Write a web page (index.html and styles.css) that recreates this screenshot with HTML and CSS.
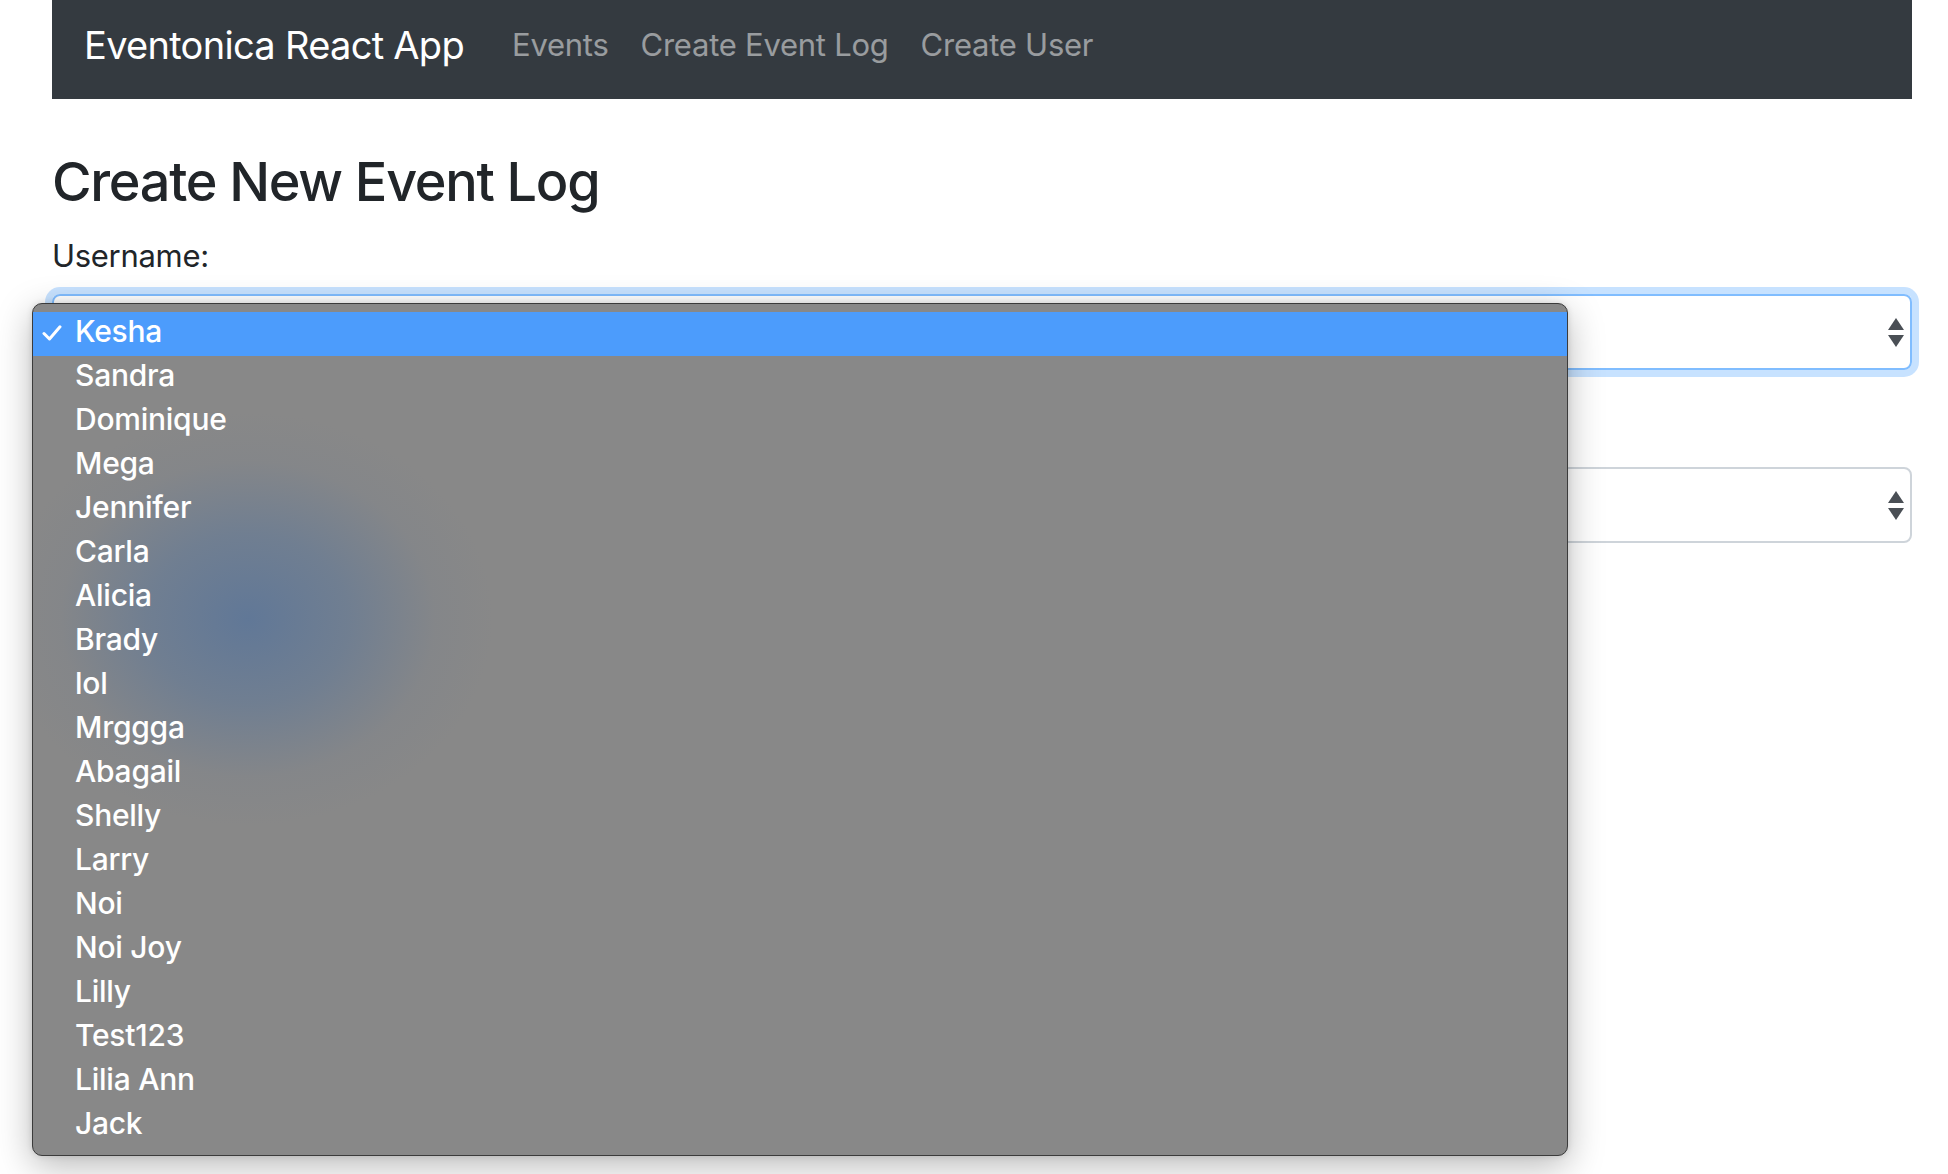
FILE: index.html
```html
<!DOCTYPE html>
<html lang="en">
<head>
<meta charset="utf-8">
<title>Eventonica React App</title>
<link rel="stylesheet" href="styles.css">
</head>
<body>
<div class="page">
  <nav class="navbar">
    <span class="brand">Eventonica React App</span>
    <a class="nav-link">Events</a>
    <a class="nav-link">Create Event Log</a>
    <a class="nav-link">Create User</a>
  </nav>
  <main class="content">
    <h3 class="title">Create New Event Log</h3>
    <div class="form-group">
      <label class="label">Username:</label>
      <div class="select focused">
        <span class="select-value"></span>
        <svg class="arrows" width="16" height="29" viewBox="0 0 16 29"><path d="M8 0 L16 12 L0 12 Z" fill="#4a4f55"/><path d="M0 17 L16 17 L8 29 Z" fill="#4a4f55"/></svg>
      </div>
    </div>
    <div class="form-group covered">
      <div class="select">
        <span class="select-value"></span>
        <svg class="arrows" width="16" height="29" viewBox="0 0 16 29"><path d="M8 0 L16 12 L0 12 Z" fill="#4a4f55"/><path d="M0 17 L16 17 L8 29 Z" fill="#4a4f55"/></svg>
      </div>
    </div>
  </main>
</div>
<div class="menu">
  <div class="blob"></div>
  <ul class="menu-list">
    <li class="item selected"><svg class="check" width="20" height="16" viewBox="0 0 20 16"><path d="M2 8.5 L7.5 14 L18 1.8" fill="none" stroke="#fff" stroke-width="3" stroke-linecap="round" stroke-linejoin="round"/></svg><span>Kesha</span></li>
    <li class="item"><span>Sandra</span></li>
    <li class="item"><span>Dominique</span></li>
    <li class="item"><span>Mega</span></li>
    <li class="item"><span>Jennifer</span></li>
    <li class="item"><span>Carla</span></li>
    <li class="item"><span>Alicia</span></li>
    <li class="item"><span>Brady</span></li>
    <li class="item"><span>lol</span></li>
    <li class="item"><span>Mrggga</span></li>
    <li class="item"><span>Abagail</span></li>
    <li class="item"><span>Shelly</span></li>
    <li class="item"><span>Larry</span></li>
    <li class="item"><span>Noi</span></li>
    <li class="item"><span>Noi Joy</span></li>
    <li class="item"><span>Lilly</span></li>
    <li class="item"><span>Test123</span></li>
    <li class="item"><span>Lilia Ann</span></li>
    <li class="item"><span>Jack</span></li>
  </ul>
</div>
</body>
</html>
```
FILE: styles.css
```css
html, body {
  margin: 0;
  padding: 0;
  background: #ffffff;
}
body {
  font-family: Inter, "Noto Sans", "Liberation Sans", sans-serif;
  color: #212529;
  position: relative;
  min-height: 1174px;
  overflow: hidden;
}
.page {
  padding: 0 36px 0 52px;
}
.navbar {
  height: 99px;
  background: #343a40;
  display: flex;
  align-items: center;
  padding: 0 32px 10px 32px;
  box-sizing: border-box;
}
.brand {
  font-size: 38px;
  color: #ffffff;
  margin-right: 32px;
  letter-spacing: -0.7px;
}
.nav-link {
  font-size: 31px;
  padding: 0 16px;
  color: rgba(255, 255, 255, 0.5);
  letter-spacing: -0.25px;
}
.content {
  padding-top: 49px;
}
.title {
  font-size: 54px;
  font-weight: 500;
  line-height: 67px;
  margin: 0 0 21px 0;
  letter-spacing: -1.3px;
}
.form-group {
  margin-bottom: 39px;
}
.form-group.covered {
  padding-top: 58px;
}
.label {
  display: block;
  font-size: 31px;
  line-height: 40px;
  margin-bottom: 18px;
  letter-spacing: -0.3px;
}
.select {
  height: 76px;
  box-sizing: border-box;
  border: 2px solid #ced4da;
  border-radius: 8px;
  display: flex;
  align-items: center;
  justify-content: space-between;
  padding: 0 6px 0 24px;
  font-size: 32px;
  color: #495057;
}
.select.focused {
  border-color: #80bdff;
  box-shadow: 0 0 0 7px rgba(0, 123, 255, 0.22);
}
.arrows {
  display: block;
}
.menu {
  position: absolute;
  left: 32px;
  top: 303px;
  width: 1536px;
  height: 853px;
  box-sizing: border-box;
  background: #888888;
  border: 1px solid #3b3b3b;
  border-radius: 10px;
  box-shadow: 0 10px 36px rgba(0, 0, 0, 0.28), 0 0 6px rgba(0, 0, 0, 0.12);
  overflow: hidden;
  padding: 8px 0;
}
.blob {
  position: absolute;
  left: -40px;
  top: 100px;
  width: 510px;
  height: 430px;
  border-radius: 50%;
  background: radial-gradient(ellipse at center, rgba(78, 112, 158, 0.68) 0%, rgba(86, 116, 155, 0.48) 28%, rgba(115, 126, 142, 0.18) 52%, rgba(136, 136, 136, 0) 68%);
}
.menu-list {
  list-style: none;
  margin: 0;
  padding: 0;
  position: relative;
}
.item {
  height: 44px;
  box-sizing: border-box;
  display: flex;
  align-items: center;
  padding: 0 0 6px 42px;
  font-size: 30px;
  font-weight: 500;
  color: #ffffff;
  position: relative;
  letter-spacing: -0.25px;
}
.item.selected {
  background: #4c9cfc;
}
.check {
  position: absolute;
  left: 9px;
  top: 13px;
}
```
